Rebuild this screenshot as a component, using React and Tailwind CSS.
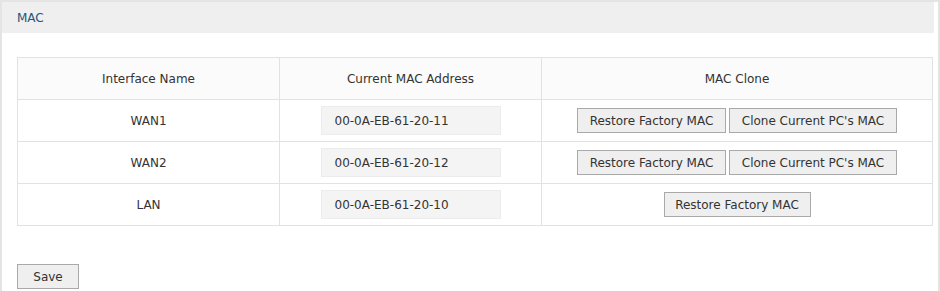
const rows = [
  { name: 'WAN1', mac: '00-0A-EB-61-20-11', clone: true },
  { name: 'WAN2', mac: '00-0A-EB-61-20-12', clone: true },
  { name: 'LAN', mac: '00-0A-EB-61-20-10', clone: false },
];

function Btn({ children, className = '' }) {
  return (
    <button
      type="button"
      className={`h-[25px] border border-[#a9a9a9] bg-[#efefef] text-[12px] text-[#333] ${className}`}
    >
      {children}
    </button>
  );
}

export default function App() {
  return (
    <div className="min-h-[291px] w-[940px] bg-white font-['DejaVu_Sans',Verdana,sans-serif] text-[12px] text-[#333]">
      <div className="min-h-[300px] border-l-2 border-t-2 border-r-2 border-[#e4e4e4] pr-[4px]">
        <div className="flex h-[31px] items-center bg-[#efefef] pl-[15px] text-[12px] text-[#24557a]">MAC</div>
        <div className="px-[15px] pt-[24px]">
          <table className="w-[916px] table-fixed border-collapse border border-[#e2e2e2]">
            <colgroup>
              <col className="w-[262px]" />
              <col className="w-[262px]" />
              <col />
            </colgroup>
            <thead>
              <tr className="h-[42px] bg-[#fbfbfb]">
                <th className="border border-[#e2e2e2] font-normal">Interface Name</th>
                <th className="border border-[#e2e2e2] font-normal">Current MAC Address</th>
                <th className="border border-[#e2e2e2] font-normal">MAC Clone</th>
              </tr>
            </thead>
            <tbody>
              {rows.map((r) => (
                <tr key={r.name} className="h-[42px]">
                  <td className="border border-[#e2e2e2] text-center">{r.name}</td>
                  <td className="border border-[#e2e2e2]">
                    <div className="mx-auto flex h-[29px] w-[180px] items-center border border-[#ececec] bg-[#f4f4f4] pl-[13px]">
                      {r.mac}
                    </div>
                  </td>
                  <td className="border border-[#e2e2e2] text-center">
                    <div className="flex justify-center gap-[3px]">
                      <Btn className={r.clone ? 'w-[149px]' : 'w-[147px]'}>Restore Factory MAC</Btn>
                      {r.clone && <Btn className="w-[168px]">Clone Current PC's MAC</Btn>}
                    </div>
                  </td>
                </tr>
              ))}
            </tbody>
          </table>
          <div className="pt-[38px]">
            <Btn className="w-[62px]">Save</Btn>
          </div>
        </div>
      </div>
    </div>
  );
}
